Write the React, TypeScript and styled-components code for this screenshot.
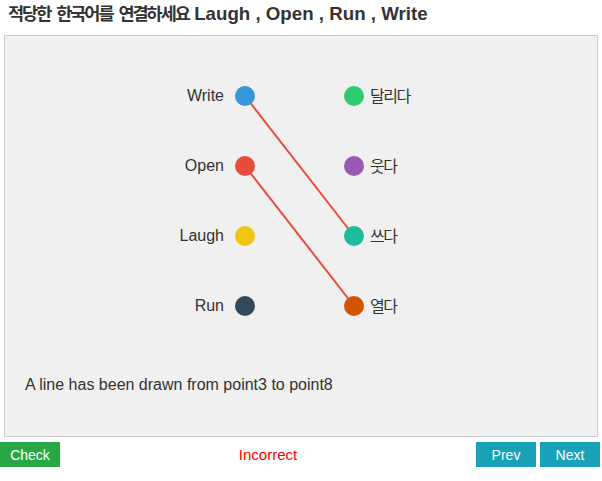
import React from "react";
import styled, { createGlobalStyle } from "styled-components";

const GlobalStyle = createGlobalStyle`
  body {
    margin: 0;
    font-family: "Liberation Sans", Arial, "Noto Sans CJK KR", sans-serif;
    color: #333;
    background: #fff;
  }
`;

const ROW_GAP = 70;
const FIRST_Y = 60;
const LEFT_X = 240;
const RIGHT_X = 349;

const leftPoints = [
  { label: "Write", color: "#3498db" },
  { label: "Open", color: "#e74c3c" },
  { label: "Laugh", color: "#f1c40f" },
  { label: "Run", color: "#34495e" },
];

const rightPoints = [
  { label: "달리다", color: "#2ecc71" },
  { label: "웃다", color: "#9b59b6" },
  { label: "쓰다", color: "#1abc9c" },
  { label: "열다", color: "#d35400" },
];

// pairs of [left index, right index]
const connections = [
  [0, 2],
  [1, 3],
];

const App = () => {
  return (
    <>
      <GlobalStyle />
      <Title>
        <Hangul>적당한 한국어를 연결하세요</Hangul> Laugh , Open , Run , Write
      </Title>
      <Board>
        <Lines width="100%" height="100%">
          {connections.map(([l, r]) => (
            <line
              key={`${l}-${r}`}
              x1={LEFT_X}
              y1={FIRST_Y + l * ROW_GAP}
              x2={RIGHT_X}
              y2={FIRST_Y + r * ROW_GAP}
              stroke="#e74c3c"
              strokeWidth={2}
            />
          ))}
        </Lines>
        <Columns>
          <Column>
            {leftPoints.map((p) => (
              <LeftNode key={p.label}>
                <Label>{p.label}</Label>
                <Dot $color={p.color} />
              </LeftNode>
            ))}
          </Column>
          <Column>
            {rightPoints.map((p) => (
              <RightNode key={p.label}>
                <Dot $color={p.color} />
                <Label $korean>{p.label}</Label>
              </RightNode>
            ))}
          </Column>
        </Columns>
        <Message>A line has been drawn from point3 to point8</Message>
      </Board>
      <Footer>
        <Button $color="#28a745">Check</Button>
        <Status>Incorrect</Status>
        <NavGroup>
          <Button $color="#17a2b8">Prev</Button>
          <Button $color="#17a2b8">Next</Button>
        </NavGroup>
      </Footer>
    </>
  );
};

const Title = styled.div`
  height: 22px;
  padding: 3px 8px 0;
  font-size: 18.72px;
  line-height: 22px;
  font-weight: 700;
  color: #333;
  margin-bottom: 10px;
  overflow: hidden;
`;

const Hangul = styled.span`
  font-size: 17.5px;
  line-height: 1;
  letter-spacing: -2px;
  word-spacing: 3px;
`;

const Board = styled.div`
  position: relative;
  margin: 0 4px;
  height: 400px;
  border: 1px solid #ccc;
  background: #f0f0f0;
`;

const Lines = styled.svg`
  position: absolute;
  inset: 0;
  pointer-events: none;
`;

const Columns = styled.div`
  position: relative;
  display: flex;
  padding-top: 50px;
`;

const Column = styled.div`
  display: flex;
  flex-direction: column;
  gap: 50px;
`;

const LeftNode = styled.div`
  width: 250px;
  height: 20px;
  display: flex;
  align-items: center;
  justify-content: flex-end;
  gap: 11px;
`;

const RightNode = styled.div`
  margin-left: 89px;
  height: 20px;
  display: flex;
  align-items: center;
  gap: 6px;
`;

const Dot = styled.span<{ $color: string }>`
  width: 20px;
  height: 20px;
  border-radius: 50%;
  background: ${(props) => props.$color};
  flex-shrink: 0;
`;

const Label = styled.span<{ $korean?: boolean }>`
  position: relative;
  top: ${(props) => (props.$korean ? "-1px" : "0")};
  font-size: 16px;
  color: #333;
  letter-spacing: ${(props) => (props.$korean ? "-1.5px" : "0")};
`;

const Message = styled.div`
  margin-top: 60px;
  padding-left: 20px;
  font-size: 16px;
  line-height: 18px;
  color: #333;
`;

const Footer = styled.div`
  display: flex;
  align-items: center;
  margin-top: 5px;
`;

const Status = styled.div`
  flex: 1;
  text-align: center;
  color: #ff0000;
  font-size: 15px;
`;

const NavGroup = styled.div`
  display: flex;
  gap: 4px;
  margin-right: 2px;
`;

const Button = styled.button<{ $color: string }>`
  width: 60px;
  height: 25px;
  border: none;
  padding: 0;
  background: ${(props) => props.$color};
  color: #fff;
  font-family: "Liberation Sans", Arial, sans-serif;
  font-size: 14px;
  cursor: pointer;
`;

export default App;
